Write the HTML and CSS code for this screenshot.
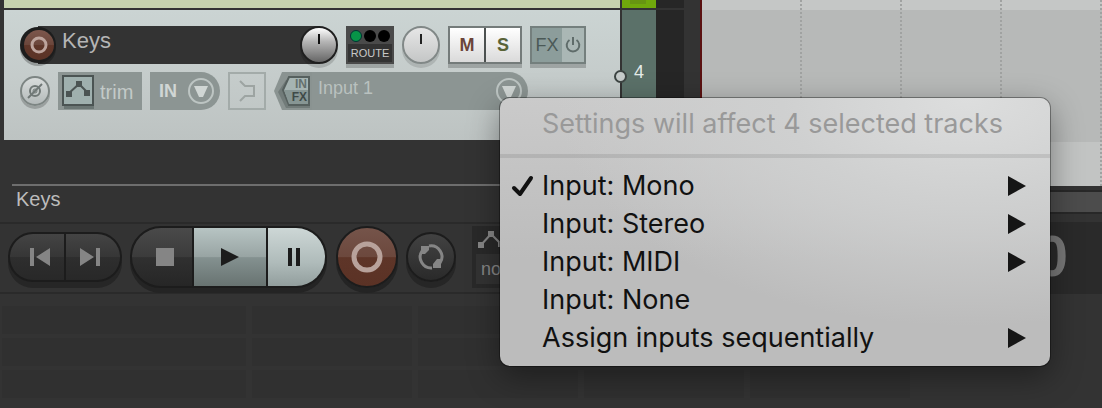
FILE: index.html
```html
<!DOCTYPE html>
<html lang="en">
<head>
<meta charset="utf-8">
<title>Track input settings</title>
<link rel="stylesheet" href="styles.css">
</head>
<body>
<main class="app">
  <div class="workspace">
    <section class="tracks" aria-label="Tracks">
      <div class="track track-prev">
        <div class="track-body track-body-green"></div>
        <div class="track-index track-index-green"><span class="index-tab"></span></div>
        <div class="track-meter"></div>
      </div>
      <div class="track track-current">
        <div class="track-body">
          <div class="row row-top">
            <div class="name-box">
              <button class="arm" aria-label="Record arm">
                <svg width="38" height="42" viewBox="0 0 38 42">
                  <defs><linearGradient id="armFill" x1="0" y1="0" x2="0" y2="1"><stop offset="0" stop-color="#7d574d"/><stop offset=".5" stop-color="#6b463b"/><stop offset=".51" stop-color="#5f3629"/><stop offset="1" stop-color="#5b3326"/></linearGradient></defs>
                  <circle cx="18" cy="22" r="18" fill="#000" opacity=".25"/>
                  <circle cx="18" cy="19" r="18" fill="#1d1d1d"/>
                  <circle cx="19" cy="19" r="15" fill="url(#armFill)"/>
                  <circle cx="19" cy="19" r="7" fill="none" stroke="#bda49d" stroke-width="3"/>
                </svg>
              </button>
              <input class="track-name" type="text" value="Keys" aria-label="Track name">
              <input class="knob knob-volume" type="range" aria-label="Volume">
            </div>
            <button class="route" aria-label="Route">
              <span class="lights"><i class="light light-on"></i><i class="light"></i><i class="light"></i></span>
              <span class="route-label">ROUTE</span>
            </button>
            <input class="knob knob-pan" type="range" aria-label="Pan">
            <div class="mute-solo">
              <button class="ms mute">M</button>
              <button class="ms solo">S</button>
            </div>
            <div class="fx-group">
              <button class="fx">FX</button>
              <button class="fx-power" aria-label="Toggle effects">
                <svg width="16" height="16" viewBox="0 0 16 16" fill="none" stroke="#5f6c6a" stroke-width="2"><path d="M4.500 3A6.300 6.300 0 1 0 11.500 3M8 0V8"/></svg>
              </button>
            </div>
          </div>
          <div class="row row-bottom">
            <button class="phase" aria-label="Phase">
              <svg width="16" height="16" viewBox="0 0 16 16" fill="none" stroke="#707876" stroke-width="2"><circle cx="8" cy="8" r="5"/><circle cx="8" cy="8" r="2" stroke-width="1"/><path d="M1 15L15 1" /></svg>
            </button>
            <button class="chip trim">
              <svg width="32" height="34" viewBox="0 0 32 34"><path d="M2 31H32V34H2z" fill="#6b7674"/><path d="M1 1H31V30H1z" fill="#9fb0ae" stroke="#4b5453" stroke-width="2"/><path d="M6 19L17 9L26 18" fill="none" stroke="#4b5453" stroke-width="2"/><path d="M4 16H10V22H4zM14 6H20V12H14zM22 15H28V21H22z" fill="#4b5453"/></svg>
              <span>trim</span>
            </button>
            <button class="chip monitor">
              <span>IN</span>
              <svg width="28" height="28" viewBox="0 0 28 28"><circle cx="14" cy="14" r="12" fill="none" stroke="#bdc5c3" stroke-width="2"/><path d="M7 9H21L16 20H12z" fill="#d0d6d4"/></svg>
            </button>
            <button class="record-mode" aria-label="Record mode">
              <svg width="20" height="26" viewBox="0 0 20 26" fill="none" stroke="#9da4a2" stroke-width="2"><path d="M3 3L8 8H17V18H8L3 23"/></svg>
            </button>
            <div class="input-box">
              <button class="in-fx" aria-label="Input FX">
                <svg width="38" height="38" viewBox="0 0 38 38"><path d="M0 19L8 0H38V38H8z" fill="#8a9391"/><path d="M4 20L12 8H36V36H12z" fill="#717b79"/><path d="M9 18L15 5H35V33H15z" fill="#a6b4b2" stroke="#56605e" stroke-width="2"/><path d="M10 18H34V32H15z" fill="#879694"/></svg>
                <span class="in-fx-text"><span class="in-fx-in">IN</span><span>FX</span></span>
              </button>
              <select class="input-select" aria-label="Record input"><option>Input 1</option></select>
              <svg width="28" height="28" viewBox="0 0 28 28"><circle cx="14" cy="14" r="12" fill="none" stroke="#bdc5c3" stroke-width="2"/><path d="M7 9H21L16 20H12z" fill="#d0d6d4"/></svg>
            </div>
          </div>
        </div>
        <div class="track-index"><span class="folder-dot"></span>4</div>
        <div class="track-meter"></div>
      </div>
      <div class="mixer-head"><span class="mixer-name">Keys</span></div>
    </section>
    <section class="arrange" aria-label="Timeline">
      <div class="lanes">
        <div class="lane lane-prev"></div>
        <div class="lane lane-current"></div>
        <div class="lane lane-empty"></div>
      </div>
      <div class="scrollbar"></div>
    </section>
  </div>

  <section class="transport" aria-label="Transport">
    <div class="pill pill-small">
      <button class="pill-button to-start" aria-label="Go to start"><svg width="20" height="18" viewBox="0 0 20 18" fill="#858585"><path d="M0 0H4V18H0zM20 0V18L6 9z"/></svg></button>
      <button class="pill-button to-end" aria-label="Go to end"><svg width="20" height="18" viewBox="0 0 20 18" fill="#858585"><path d="M16 0H20V18H16zM0 0V18L14 9z"/></svg></button>
    </div>
    <div class="pill pill-large">
      <button class="pill-button stop" aria-label="Stop"><svg width="18" height="18" viewBox="0 0 18 18"><path d="M0 0H18V18H0z" fill="#858585"/></svg></button>
      <button class="pill-button play" aria-label="Play"><svg width="18" height="18" viewBox="0 0 18 18"><path d="M0 0L18 9L0 18z" fill="#1c1c1c"/></svg></button>
      <button class="pill-button pause" aria-label="Pause"><svg width="12" height="18" viewBox="0 0 12 18"><path d="M0 0H4V18H0zM8 0H12V18H8z" fill="#1c1c1c"/></svg></button>
    </div>
    <button class="round record" aria-label="Record"><svg width="32" height="32" viewBox="0 0 32 32"><circle cx="16" cy="16" r="13" fill="none" stroke="#b8a29b" stroke-width="5"/></svg></button>
    <button class="round repeat" aria-label="Repeat"><svg width="26" height="26" viewBox="0 0 26 26" fill="none" stroke="#858585" stroke-width="3"><path d="M4 7A11 11 0 0 0 14 24M22 19A11 11 0 0 0 11 2"/><path d="M3 2H11V6L7 10H3zM23 24H15V20L19 15H23z" fill="#858585" stroke="none"/></svg></button>
    <div class="automation">
      <svg width="32" height="22" viewBox="0 0 32 22"><path d="M3 15L13 4L23 14" fill="none" stroke="#858585" stroke-width="2"/><path d="M0 12H6V18H0zM10 1H16V7H10zM20 11H26V17H20z" fill="#858585"/></svg>
      <button class="automation-mode">none</button>
    </div>
    <output class="time">0</output>
  </section>

  <div class="slots">
    <i></i><i></i><i></i><i></i><i></i>
    <i></i><i></i><i></i><i></i><i></i>
    <i></i><i></i><i></i><i></i><i></i>
  </div>

  <div class="menu" role="menu">
    <div class="menu-title">Settings will affect 4 selected tracks</div>
    <div class="menu-items">
      <button class="menu-item" role="menuitem"><svg class="check" width="24" height="24" viewBox="0 0 24 24"><path d="M4 14L10 20L21 4" fill="none" stroke="#111" stroke-width="4" stroke-linecap="round" stroke-linejoin="round"/></svg><span>Input: Mono</span><svg class="more" width="18" height="20" viewBox="0 0 18 20"><path d="M0 0L18 10L0 20z"/></svg></button>
      <button class="menu-item" role="menuitem"><i class="check"></i><span>Input: Stereo</span><svg class="more" width="18" height="20" viewBox="0 0 18 20"><path d="M0 0L18 10L0 20z"/></svg></button>
      <button class="menu-item" role="menuitem"><i class="check"></i><span>Input: MIDI</span><svg class="more" width="18" height="20" viewBox="0 0 18 20"><path d="M0 0L18 10L0 20z"/></svg></button>
      <button class="menu-item" role="menuitem"><i class="check"></i><span>Input: None</span></button>
      <button class="menu-item" role="menuitem"><i class="check"></i><span>Assign inputs sequentially</span><svg class="more" width="18" height="20" viewBox="0 0 18 20"><path d="M0 0L18 10L0 20z"/></svg></button>
    </div>
  </div>
</main>
</body>
</html>
```

FILE: styles.css
```css
* { box-sizing: border-box; }

body {
  margin: 0;
  background: #333;
  font-family: "Liberation Sans", Arial, sans-serif;
  overflow: hidden;
}

button, input, select {
  margin: 0;
  padding: 0;
  border: 0;
  background: none;
  font: inherit;
  color: inherit;
}

svg { display: block; flex: none; }

.app {
  position: relative;
  display: flex;
  flex-direction: column;
  min-height: 100vh;
}

/* Workspace */
.workspace { display: flex; }

.tracks {
  flex: none;
  width: 700px;
  display: flex;
  flex-direction: column;
}

.track { display: flex; padding: 0 16px 0 4px; }
.track-prev { height: 8px; margin-bottom: 2px; }
.track-current { height: 130px; }

.track-body {
  flex: 1;
  display: flex;
  flex-direction: column;
  gap: 8px;
  padding: 16px;
  margin-right: 2px;
  background: linear-gradient(#cbd4d3, #c5cccb 50%, #bdc3c2);
}
.track-body-green { background: #c6d3ae; padding: 0; }

.track-index {
  position: relative;
  width: 34px;
  background: #5b7169;
  color: #e4ebe8;
  font-size: 18px;
  line-height: 20px;
  padding: 52px 0 0 12px;
}
.track-index-green { background: #70a80c; padding: 0; }
.index-tab { display: block; width: 16px; height: 4px; margin-left: 8px; background: #679511; }
.track-meter { width: 28px; background: #262626; }

.folder-dot {
  position: absolute;
  left: -8px;
  top: 60px;
  width: 13px;
  height: 13px;
  border: 2px solid #3d4543;
  border-radius: 50%;
  background: #c6cccb;
}

.row { display: flex; align-items: flex-start; gap: 8px; height: 38px; }

.name-box {
  display: flex;
  flex: none;
  width: 318px;
  height: 38px;
  background: linear-gradient(#333, #333) 18px 0 / 282px 38px no-repeat;
}
.arm { width: 38px; height: 42px; }
.track-name {
  flex: 1;
  min-width: 0;
  height: 30px;
  padding-left: 4px;
  color: #b5b5b5;
  font-size: 22px;
}

.knob {
  appearance: none;
  flex: none;
  width: 38px;
  height: 38px;
  border-radius: 50%;
}
.knob::-webkit-slider-thumb { appearance: none; width: 0; height: 0; }
.knob-volume {
  border: 2px solid #1f1f1f;
  background: linear-gradient(#111, #111) 16px 6px / 2px 10px no-repeat, linear-gradient(#fff, #b5b5b5 40%, #666);
  box-shadow: 0 4px 0 rgba(0, 0, 0, .15);
}
.knob-pan {
  border: 2px solid #818887;
  background: linear-gradient(#222, #222) 16px 6px / 2px 10px no-repeat, linear-gradient(#e6e6e6, #c4c6c6);
  box-shadow: 0 4px 0 rgba(0, 0, 0, .12);
}

.route {
  display: flex;
  flex-direction: column;
  width: 48px;
  height: 38px;
  border: 2px solid #4a4a4a;
  background: #333;
  box-shadow: 0 4px 0 rgba(0, 0, 0, .2);
}
.lights { display: flex; gap: 2px; padding: 2px; background: #4a4a4a; }
.light { width: 12px; height: 12px; border-radius: 50%; background: #000; }
.light-on { background: #079448; border: 1px solid #033; }
.route-label { align-self: center; color: #c9c9c9; font-size: 11px; line-height: 18px; }

.mute-solo {
  display: flex;
  gap: 2px;
  width: 74px;
  height: 38px;
  border: 2px solid #747b7a;
  background: #4c5150;
  box-shadow: 0 4px 0 rgba(0, 0, 0, .2);
}
.ms { flex: 1; background: linear-gradient(#fff, #dadada); font-size: 18px; font-weight: bold; text-align: center; }
.mute { color: #6b4439; }
.solo { color: #596337; }

.fx-group {
  display: flex;
  width: 56px;
  height: 38px;
  border: 2px solid #747f7d;
  box-shadow: 0 4px 0 rgba(0, 0, 0, .2);
}
.fx { width: 30px; background: #8c9d9b; color: #4b5957; font-size: 18px; }
.fx-power { flex: 1; display: grid; place-items: center; background: #aab7b5; }

.phase {
  display: grid;
  place-items: center;
  flex: none;
  width: 30px;
  height: 30px;
  margin-top: 4px;
  border: 2px solid #7d8583;
  border-radius: 50%;
  background: linear-gradient(#d8dcdb, #b4baba);
  box-shadow: 0 3px 0 rgba(0, 0, 0, .2);
}

.chip {
  display: flex;
  align-items: center;
  height: 38px;
  background: #8c9593;
  color: #c3cac8;
}
.trim { width: 84px; gap: 6px; padding: 2px 0 0 4px; font-size: 20px; }
.monitor {
  width: 70px;
  justify-content: space-between;
  padding: 0 5px 0 9px;
  border-radius: 0 19px 19px 0;
  color: #d0d6d4;
  font-size: 18px;
  font-weight: bold;
}
.record-mode {
  display: grid;
  place-items: center;
  width: 38px;
  height: 38px;
  border: 2px solid #a3aba9;
}

.input-box {
  display: flex;
  align-items: center;
  width: 254px;
  height: 38px;
  padding-right: 5px;
  border-radius: 0 19px 19px 0;
  background: linear-gradient(#8c9593, #8c9593) 36px 0 no-repeat;
}
.in-fx { display: grid; width: 38px; height: 38px; }
.in-fx > * { grid-area: 1 / 1; }
.in-fx-text {
  display: grid;
  align-content: start;
  justify-items: end;
  padding: 6px 5px 0 0;
  color: #3f4a48;
  font-size: 12px;
  line-height: 13px;
  font-weight: bold;
}
.in-fx-in { color: #64706e; }
.input-select {
  appearance: none;
  flex: 1;
  height: 38px;
  padding: 0 0 6px 6px;
  color: #b9c1bf;
  font-size: 18px;
}

.mixer-head {
  margin: 44px 0 0 12px;
  padding: 0 4px;
  border-top: 2px solid #6e6e6e;
  height: 38px;
}
.mixer-name { color: #bcbcbc; font-size: 20px; line-height: 26px; }

/* Timeline */
.arrange { flex: 1; min-width: 0; border-left: 2px solid #5a1111; height: 186px; }
.lanes { position: relative; }
.lanes::before {
  content: "";
  position: absolute;
  inset: 0;
  background: repeating-linear-gradient(#a0a2a1 0 2px, transparent 2px 4px);
  mask: repeating-linear-gradient(90deg, transparent 0 98px, #000 98px 100px);
}
.lane-prev { height: 10px; background: #c5c7c6; }
.lane-current { height: 132px; background: #b7b9b8; }
.lane-empty { height: 44px; background: #c2c4c3; }
.scrollbar {
  height: 24px;
  margin-top: 4px;
  border: solid #282828;
  border-width: 2px 0;
  background: #4c4c4c;
}

/* Transport */
.transport {
  display: flex;
  align-items: center;
  height: 72px;
  padding: 0 0 2px 8px;
  border: solid #2a2a2a;
  border-width: 2px 0;
}
.pill { display: flex; gap: 2px; background: #1c1c1c; border: 2px solid #1c1c1c; overflow: hidden; flex: none; }
.pill-small { width: 114px; height: 50px; border-radius: 25px; margin-right: 8px; box-shadow: 0 6px 0 #262626; }
.pill-large { width: 197px; height: 62px; border-radius: 31px; margin-right: 9px; box-shadow: 0 5px 0 #242424; }
.pill-button {
  flex: 1;
  display: grid;
  place-items: center;
  background: linear-gradient(#444, #363636 50%, #2e2e2e 51%, #282828);
}
.to-start { padding-left: 6px; }
.to-end { padding-right: 6px; }
.pill-large .stop { flex: none; width: 60px; padding-left: 6px; background: linear-gradient(#4a4a4a, #3b3b3b 50%, #303030 51%, #262626); }
.pill-large .play { flex: none; width: 72px; background: linear-gradient(#b7c4c3, #98a4a3 50%, #849190 51%, #687371); }
.pill-large .pause { padding-right: 6px; background: linear-gradient(#cdd7d6, #afbbba 60%, #929e9d); }

.round { flex: none; display: grid; place-items: center; border: 2px solid #1c1c1c; border-radius: 50%; }
.record {
  width: 62px;
  height: 62px;
  margin-right: 8px;
  background: linear-gradient(#75544a, #6c483d 50%, #5e3528 51%, #5b3225);
  box-shadow: 0 5px 0 #242424;
}
.repeat { width: 50px; height: 50px; margin-right: 16px; background: linear-gradient(#424242, #2a2a2a); box-shadow: 0 6px 0 #262626; }

.automation { flex: none; width: 120px; height: 62px; padding: 4px; background: #292929; color: #858585; }
.automation svg { margin: 0 0 2px 2px; }
.automation-mode { display: block; width: 112px; height: 30px; padding-left: 5px; background: #333; text-align: left; font-size: 18px; }

.time {
  flex: 1;
  align-self: flex-start;
  margin: -2px 0 0 48px;
  padding-right: 34px;
  height: 72px;
  background: #2a2a2a;
  color: #787878;
  font-size: 58px;
  line-height: 68px;
  font-weight: bold;
  text-align: right;
}

.slots {
  display: grid;
  grid-template-columns: 244px repeat(4, 160px);
  grid-auto-rows: 28px;
  gap: 4px 6px;
  padding: 12px 2px 10px;
}
.slots i { background: #303030; }

/* Context menu */
.menu {
  position: absolute;
  left: 500px;
  top: 98px;
  width: 550px;
  padding-bottom: 9px;
  border-radius: 10px;
  background: radial-gradient(ellipse 75% 85% at 85% 0, #dddede, #cfd0d0 45%, transparent), linear-gradient(#cacaca, #bcbcbc 60%);
  box-shadow: 0 0 0 1px rgba(0, 0, 0, .35), 0 10px 32px rgba(0, 0, 0, .4);
  font-family: Inter, "Noto Sans", sans-serif;
  font-size: 27px;
  line-height: 38px;
  color: #111;
}
.menu-title {
  padding: 7px 16px 11px 42px;
  border-bottom: 4px solid rgba(0, 0, 0, .09);
  color: #999;
  white-space: nowrap;
}
.menu-items { padding-top: 9px; }
.menu-item {
  display: flex;
  align-items: center;
  width: 100%;
  height: 38px;
  padding: 0 24px 0 10px;
  text-align: left;
}
.check { width: 24px; margin-right: 8px; }
.more { margin-left: auto; fill: #151515; }
```
